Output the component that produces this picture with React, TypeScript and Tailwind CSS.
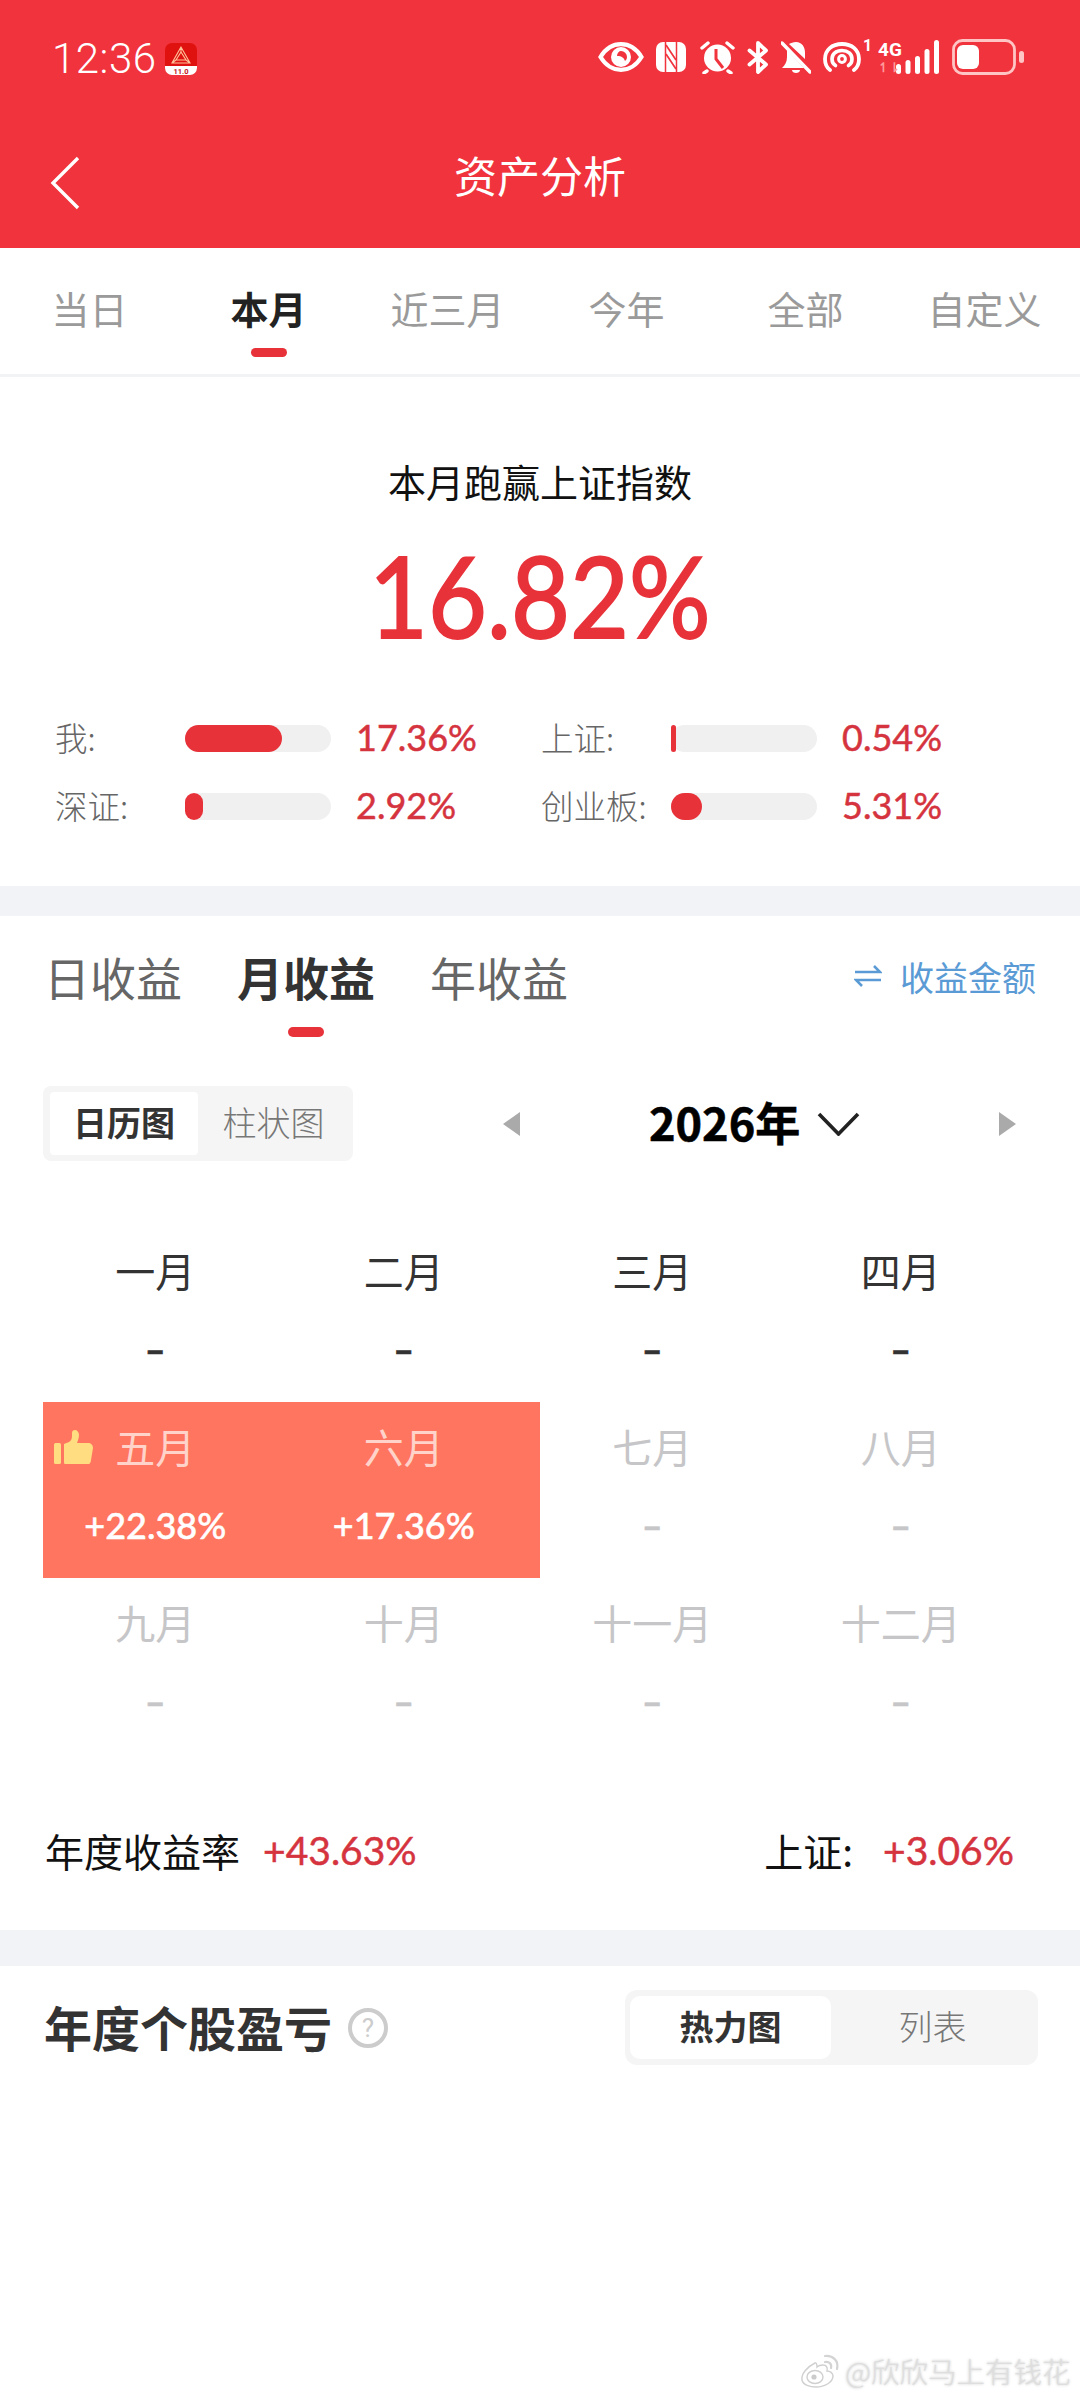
import React from "react";

const numFont = "[font-family:Lato,'Noto_Sans_CJK_SC',sans-serif] [-webkit-text-stroke:0.5px_currentColor]";

function Eye() {
  return (
    <svg width="46" height="30" viewBox="0 0 46 30" className="shrink-0">
      <path d="M2.5 15C8 6 15 2.2 23 2.2S38 6 43.5 15C38 24 31 27.8 23 27.8S8 24 2.5 15Z" fill="none" stroke="#fff" strokeWidth="4.2" />
      <circle cx="23" cy="15" r="10" fill="#fff" />
      <path d="M23 9a6 6 0 0 1 6 6c0 2-1 3-2 4-1-3-3-5-8-5 0-3 2-5 4-5Z" fill="#f1333d" />
    </svg>
  );
}
function Nfc() {
  return (
    <svg width="30" height="30" viewBox="0 0 30 30" className="shrink-0">
      <rect x="0" y="0" width="30" height="30" rx="7" fill="#fff" />
      <path d="M9.5 0v30M20.5 0v30" stroke="#f1333d" strokeWidth="1.5" fill="none" />
      <path d="M10 3l10 15M10 12l10 15" stroke="#f1333d" strokeWidth="1.7" fill="none" />
    </svg>
  );
}
function Alarm() {
  return (
    <svg width="35" height="33" viewBox="0 0 35 33" className="shrink-0">
      <circle cx="17.5" cy="17" r="13.5" fill="#fff" />
      <path d="M2 7l6-5M33 7l-6-5" stroke="#fff" strokeWidth="3.4" strokeLinecap="round" />
      <path d="M7 30l-3 2M28 30l3 2" stroke="#fff" strokeWidth="3.4" strokeLinecap="round" />
      <path d="M16 8v10l7 9" stroke="#f1333d" strokeWidth="3" fill="none" />
    </svg>
  );
}
function Bluetooth() {
  return (
    <svg width="22" height="33" viewBox="0 0 22 33" className="shrink-0">
      <path d="M2.5 9.5L19 23.5l-8 7.5V2l8 7.5L2.5 23.5" fill="none" stroke="#fff" strokeWidth="3.8" strokeLinejoin="round" strokeLinecap="round" />
    </svg>
  );
}
function BellOff() {
  return (
    <svg width="30" height="33" viewBox="0 0 30 33" className="shrink-0">
      <path d="M15 1c6 0 9 5 9 11v6L8 3c2-1 4-2 7-2ZM6 9l17 18H1c3-3 5-6 5-11v-7Z" fill="#fff" />
      <path d="M11 29h8c0 2-2 3-4 3s-4-1-4-3Z" fill="#fff" />
      <path d="M1 2l28 29" stroke="#fff" strokeWidth="3.4" strokeLinecap="round" />
    </svg>
  );
}
function Hotspot() {
  return (
    <svg width="38" height="30" viewBox="0 0 38 30" className="shrink-0">
      <path d="M7 28C3 25 2 21 2 17 2 8 9 2 19 2s17 6 17 15c0 4-1 8-5 11" fill="none" stroke="#fff" strokeWidth="3.8" strokeLinecap="round" />
      <path d="M12.5 23.5C10 22 9 19.5 9 17c0-5 4-8.5 10-8.5S29 12 29 17c0 2.5-1 5-3.5 6.5" fill="none" stroke="#fff" strokeWidth="3.6" strokeLinecap="round" />
      <circle cx="19" cy="17" r="3.4" fill="none" stroke="#fff" strokeWidth="3" />
    </svg>
  );
}
function Signal() {
  return (
    <svg width="44" height="34" viewBox="0 0 44 34" className="shrink-0">
      <rect x="0" y="24" width="5" height="10" rx="2.5" fill="#fff" />
      <rect x="9.5" y="20" width="5" height="14" rx="2.5" fill="#fff" />
      <rect x="19" y="16" width="5" height="18" rx="2.5" fill="#fff" />
      <rect x="28.5" y="9" width="5" height="25" rx="2.5" fill="#fff" />
      <rect x="38" y="0" width="5" height="34" rx="2.5" fill="#fff" />
    </svg>
  );
}
function Battery() {
  return (
    <svg width="72" height="36" viewBox="0 0 72 36" className="shrink-0">
      <rect x="1.5" y="1.5" width="61" height="33" rx="9" fill="none" stroke="#ffc4c4" strokeWidth="2.8" />
      <rect x="5" y="6" width="22" height="24" rx="6" fill="#fff" />
      <rect x="67" y="12" width="5" height="12" rx="2.5" fill="#ffc4c4" />
    </svg>
  );
}
function AppIcon() {
  return (
    <svg width="32" height="32" viewBox="0 0 32 32" className="shrink-0">
      <rect width="32" height="32" rx="7" fill="#e0120f" />
      <path d="M0 23h32v2a7 7 0 0 1-7 7H7a7 7 0 0 1-7-7Z" fill="#fff" />
      <path d="M16 4L7 20h18ZM16 9l-5 8h10ZM16 4v5M7 20l4-3M25 20l-4-3" fill="none" stroke="#ffc39a" strokeWidth="1.1" />
      <text x="16" y="30.5" textAnchor="middle" fontSize="7.5" fontWeight="700" fill="#c4121a" fontFamily="Roboto, sans-serif">11.0</text>
    </svg>
  );
}

function StatusBar() {
  return (
    <div className="h-[115px] flex items-start pl-[52px] pr-[56px] pt-[38px] justify-between">
      <div className="flex items-center">
        <span className="text-[42px] leading-[42px] text-[#fff] [font-family:Roboto,sans-serif] font-light w-[113px] tracking-[0.5px]">12:36</span>
        <AppIcon />
      </div>
      <div className="flex items-center h-[38px] text-white">
        <Eye />
        <div className="w-[12px]" />
        <Nfc />
        <div className="w-[14px]" />
        <Alarm />
        <div className="w-[12px]" />
        <Bluetooth />
        <div className="w-[12px]" />
        <BellOff />
        <div className="w-[12px]" />
        <Hotspot />
        <span className="text-[16px] leading-[16px] self-start ml-[2px] w-[15px] font-bold [font-family:Roboto,sans-serif]">1</span>
        <div className="relative w-[18px] h-[36px] shrink-0">
          <span className="absolute left-0 top-[1px] text-[19px] leading-[19px] font-bold [font-family:Roboto,sans-serif]">4G</span>
          <span className="absolute left-0 top-[22px] text-[13px] leading-[13px] text-[#ff9a9a] font-bold [font-family:Roboto,sans-serif]">↿⇂</span>
        </div>
        <Signal />
        <div className="w-[12px]" />
        <Battery />
      </div>
    </div>
  );
}

function TopTabs() {
  const tabs = ["当日", "本月", "近三月", "今年", "全部", "自定义"];
  return (
    <div className="h-[129px] grid grid-cols-6 pr-[6px] border-b-[3px] border-[#f2f3f5]">
      {tabs.map((t, i) => (
        <div key={t} className="flex flex-col items-center pt-[36px]">
          <span className={i === 1 ? "text-[38px] leading-[48px] text-[#222] font-bold" : "text-[38px] leading-[48px] text-[#9a9a9a]"}>{t}</span>
          {i === 1 && <div className="mt-[16px] w-[36px] h-[9px] rounded-full bg-[#e8323a]" />}
        </div>
      ))}
    </div>
  );
}

function Bar({ label, fill, value, w }: { label: string; fill: number; value: string; w: number }) {
  return (
    <div className="flex items-center h-[68px]" style={{ width: w }}>
      <span className="w-[130px] -mt-[3px] text-[32.5px] leading-[40px] text-[#666] font-light">{label}</span>
      <div className="w-[146px] h-[27px] rounded-full bg-[#f0f0f0]">
        <div className="h-full rounded-full bg-[#e8323a]" style={{ width: fill }} />
      </div>
      <span className={`ml-[25px] -mt-[3px] text-[36px] leading-[40px] text-[#d5343f] ${numFont}`}>{value}</span>
    </div>
  );
}

function Summary() {
  return (
    <div className="h-[509px] flex flex-col">
      <div className="pt-[79px] text-center text-[38px] leading-[50px] text-[#111]">本月跑赢上证指数</div>
      <div className="mt-[28px] h-[125px] flex justify-center">
        <span className="block scale-x-[0.9] text-[113px] leading-[120px] text-[#e8323a] [font-family:Lato,sans-serif] [-webkit-text-stroke:2px_#e8323a]">16.82%</span>
      </div>
      <div className="mt-[45px] pl-[55px]">
        <div className="flex">
          <Bar label="我:" fill={97} value="17.36%" w={486} />
          <Bar label="上证:" fill={5} value="0.54%" w={480} />
        </div>
        <div className="flex">
          <Bar label="深证:" fill={18} value="2.92%" w={486} />
          <Bar label="创业板:" fill={31} value="5.31%" w={480} />
        </div>
      </div>
    </div>
  );
}

function Segment({ a, b, full }: { a: string; b: string; full?: boolean }) {
  return (
    <div className={full ? "w-[413px] h-[75px] rounded-[12px] bg-[#f5f5f5] flex py-[6px] pl-[5px]" : "w-[310px] h-[75px] rounded-[8px] bg-[#f5f5f5] flex py-[6px] pl-[7px]"}>
      <div className={full ? "w-[201px] pb-[4px] rounded-[10px] bg-white flex items-center justify-center text-[34px] font-bold text-[#333]" : "w-[148px] pb-[4px] rounded-[4px] bg-white flex items-center justify-center text-[34px] font-bold text-[#333]"}>{a}</div>
      <div className="flex-1 pb-[4px] pr-[4px] flex items-center justify-center text-[34px] text-[#777] font-light">{b}</div>
    </div>
  );
}

type Month = { m: string; v: string; kind: "dark" | "hot" | "mute"; thumb?: boolean };

const months: Month[] = [
  { m: "一月", v: "–", kind: "dark" },
  { m: "二月", v: "–", kind: "dark" },
  { m: "三月", v: "–", kind: "dark" },
  { m: "四月", v: "–", kind: "dark" },
  { m: "五月", v: "+22.38%", kind: "hot", thumb: true },
  { m: "六月", v: "+17.36%", kind: "hot" },
  { m: "七月", v: "–", kind: "mute" },
  { m: "八月", v: "–", kind: "mute" },
  { m: "九月", v: "–", kind: "mute" },
  { m: "十月", v: "–", kind: "mute" },
  { m: "十一月", v: "–", kind: "mute" },
  { m: "十二月", v: "–", kind: "mute" },
];

function Thumb() {
  return (
    <svg width="39" height="34" viewBox="0 0 39 34" className="absolute left-[11px] top-[28px]">
      <rect x="0" y="13" width="7" height="21" rx="1.5" fill="#ffdd80" />
      <path d="M10 14l5-2c2-1 3-3 3-6V3c0-2 1-3 3-3s4 2 4 5c0 3-1 5-2 8h11c3 0 5 2 5 5l-2 12c0 3-2 5-5 5H13c-2 0-3-1-3-3Z" fill="#ffdd80" />
    </svg>
  );
}

function MonthCell({ c }: { c: Month }) {
  const bg = c.kind === "hot" ? "bg-[#ff7560]" : "";
  const labelColor = c.kind === "dark" ? "text-[#333]" : c.kind === "hot" ? "text-[#ffd3c9]" : "text-[#c6c6c8]";
  const valueColor = c.kind === "dark" ? "text-[#333]" : c.kind === "hot" ? "text-white" : "text-[#c6c6c8]";
  return (
    <div className={`relative h-[176px] flex flex-col items-center pt-[20px] pr-[24px] ${bg}`}>
      {c.thumb && <Thumb />}
      <span className={`text-[40px] leading-[48px] ${labelColor}`}>{c.m}</span>
      <span className={`mt-[30px] text-[36px] leading-[50px] ${c.kind === "hot" ? "font-medium" : c.kind === "dark" ? "font-black" : "font-bold"} ${valueColor} ${numFont}`}>{c.v}</span>
    </div>
  );
}

function Returns() {
  return (
    <div className="h-[1014px] flex flex-col">
      <div className="flex justify-between pl-[44px] pr-[44px] pt-[30px]">
        <div className="flex gap-[55px]">
          <span className="text-[46px] leading-[60px] text-[#666]">日收益</span>
          <div className="flex flex-col items-center">
            <span className="text-[46px] leading-[60px] text-[#333] font-bold">月收益</span>
            <div className="mt-[21px] w-[36px] h-[10px] rounded-full bg-[#e8323a]" />
          </div>
          <span className="text-[46px] leading-[60px] text-[#666]">年收益</span>
        </div>
        <div className="flex items-center h-[60px] gap-[18px] text-[34px] text-[#5b9bd5]">
          <svg width="28" height="22" viewBox="0 0 28 22" className="shrink-0">
            <path d="M1 7h25l-6-6M27 15H2l6 6" fill="none" stroke="#5b9bd5" strokeWidth="2.6" />
          </svg>
          <span>收益金额</span>
        </div>
      </div>
      <div className="mt-[49px] h-[75px] flex items-center pl-[43px]">
        <Segment a="日历图" b="柱状图" />
        <svg width="17" height="24" viewBox="0 0 17 24" className="ml-[150px] shrink-0">
          <path d="M17 0v24L0 12Z" fill="#aaa" />
        </svg>
        <span className="ml-[129px] -mt-[4px] w-[150px] text-[45px] leading-[60px] font-bold text-black whitespace-nowrap [-webkit-text-stroke:0.6px_#000]">2026年</span>
        <svg width="43" height="24" viewBox="0 0 43 24" className="ml-[18px] shrink-0">
          <path d="M2 2l19.5 20L41 2" fill="none" stroke="#222" strokeWidth="3.6" />
        </svg>
        <svg width="17" height="24" viewBox="0 0 17 24" className="ml-[139px] shrink-0">
          <path d="M0 0v24l17-12Z" fill="#aaa" />
        </svg>
      </div>
      <div className="mt-[65px] ml-[43px] w-[994px] grid grid-cols-4">
        {months.map((c) => (
          <MonthCell key={c.m} c={c} />
        ))}
      </div>
      <div className="h-[176px] pt-[16px] flex items-center justify-between pl-[45px] pr-[66px] text-[39px] text-[#111]">
        <div className="flex items-center gap-[23px]">
          <span>年度收益率</span>
          <span className={`text-[39px] text-[#d5343f] ${numFont}`}>+43.63%</span>
        </div>
        <div className="flex items-center gap-[30px]">
          <span>上证:</span>
          <span className={`text-[39px] text-[#d5343f] ${numFont}`}>+3.06%</span>
        </div>
      </div>
    </div>
  );
}

function Stocks() {
  return (
    <div className="flex items-center justify-between pl-[44px] pr-[42px] pt-[24px]">
      <div className="flex items-center gap-[16px]">
        <span className="-mt-[4px] text-[48px] leading-[60px] font-bold text-[#333]">年度个股盈亏</span>
        <div className="w-[40px] h-[40px] rounded-full border-[4px] border-[#ccc] flex items-center justify-center text-[26px] leading-none text-[#ccc] [font-family:Roboto,sans-serif]">?</div>
      </div>
      <Segment a="热力图" b="列表" full />
    </div>
  );
}

function Watermark() {
  return (
    <div className="absolute left-[800px] top-[2354px] flex items-center gap-[5px]">
      <svg width="40" height="34" viewBox="0 0 40 34" className="shrink-0">
        <path d="M15 9C7 13 1 20 2 26c1 5 8 7 14 7 9 0 17-5 17-11 0-3-3-5-6-5 1-4-1-6-4-6-3 0-5 1-6 2 0-3-1-5-2-4Z" fill="#fff" stroke="#d0d0d0" strokeWidth="1.4" />
        <ellipse cx="15" cy="23" rx="8" ry="6.5" fill="#fff" stroke="#d0d0d0" strokeWidth="1.4" />
        <circle cx="14" cy="23" r="2.6" fill="#ccc" />
        <path d="M25 8c4-1 7 2 6 6M25 2c8-1 14 5 12 13" fill="none" stroke="#d4d4d4" strokeWidth="2.2" strokeLinecap="round" />
      </svg>
      <span className="text-[28.5px] leading-[34px] whitespace-nowrap text-[#dedede] font-light [text-shadow:0_0_3px_#c4c4c4]">@欣欣马上有钱花</span>
    </div>
  );
}

export default function App() {
  return (
    <div className="relative w-[1080px] h-[2400px] overflow-hidden bg-white [font-family:'Noto_Sans_CJK_SC',sans-serif]">
      <div className="h-[248px] bg-[#f1333d]">
        <StatusBar />
        <div className="h-[124px] grid grid-cols-[1fr_auto_1fr] items-center pl-[50px]">
          <svg width="30" height="54" viewBox="0 0 30 54" className="mt-[12px]">
            <path d="M28 2L3 27l25 25" fill="none" stroke="#fff" strokeWidth="3.4" />
          </svg>
          <span className="-mt-[6px] text-[43px] leading-[56px] text-white -ml-[50px]">资产分析</span>
          <span />
        </div>
      </div>
      <TopTabs />
      <Summary />
      <div className="h-[30px] bg-[#f2f3f7]" />
      <Returns />
      <div className="h-[36px] bg-[#f2f3f7]" />
      <Stocks />
      <Watermark />
    </div>
  );
}
